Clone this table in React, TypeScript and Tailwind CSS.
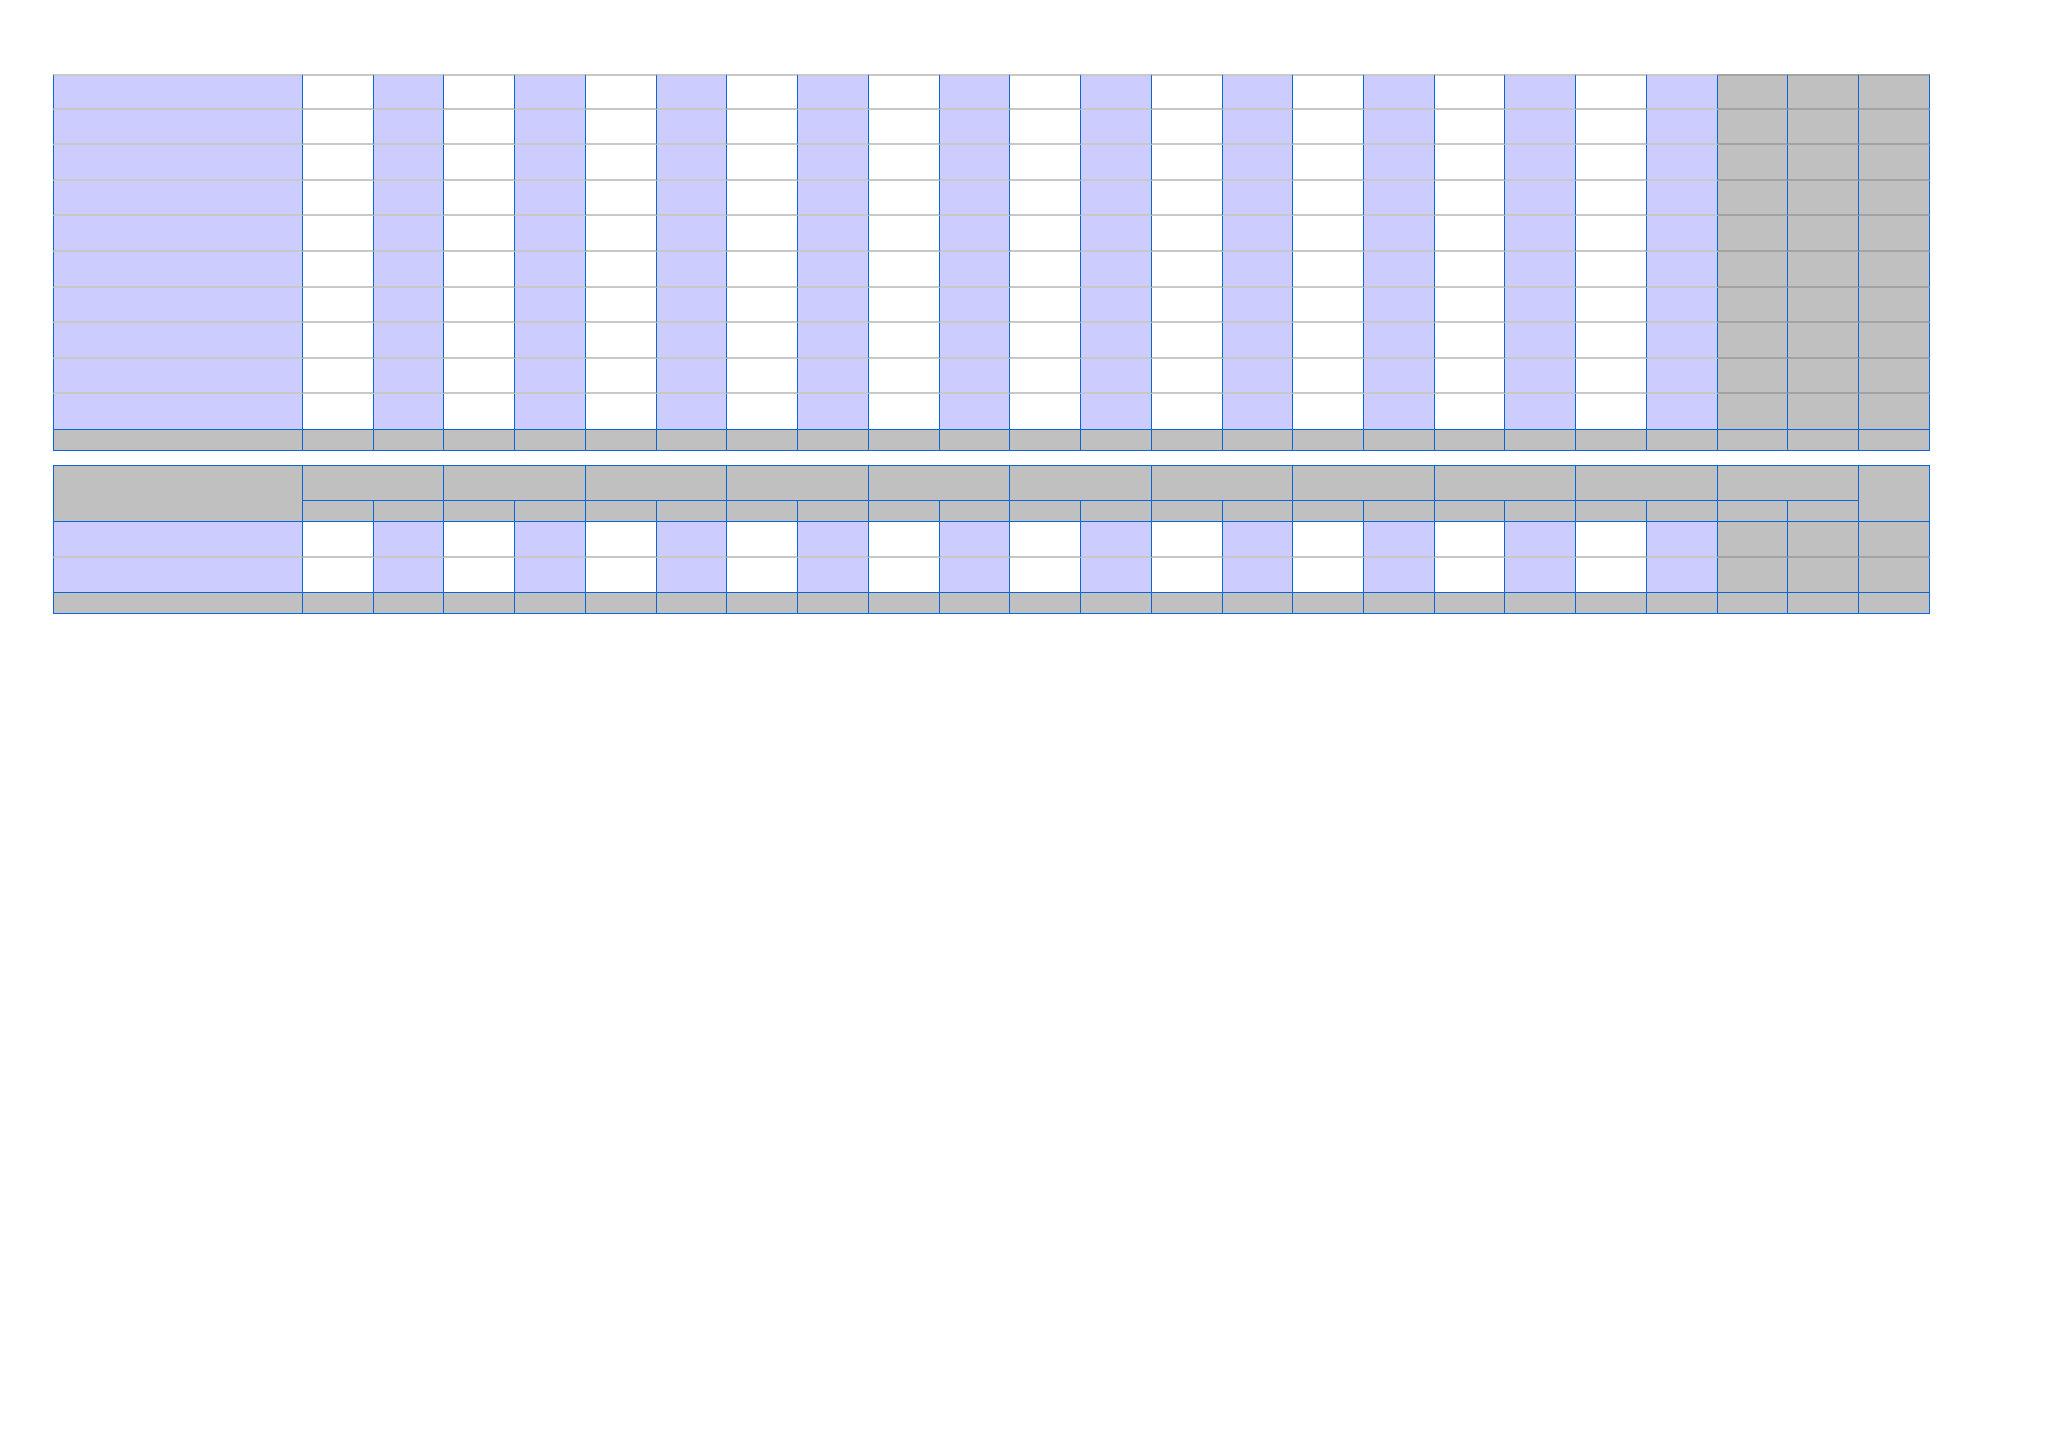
import React from "react"

const WHITE = "bg-white"
const LAV = "bg-[#ccccff]"
const GRAY = "bg-[#c0c0c0]"

// column colors: 20 alternating then 3 gray
const cols = Array.from({ length: 23 }, (_, i) => (i >= 20 ? GRAY : i % 2 === 0 ? WHITE : LAV))

function ColGroup() {
  return (
    <colgroup>
      <col className="w-[250px]" />
      {cols.map((_, i) => (
        <col key={i} className="w-[70.74px]" />
      ))}
    </colgroup>
  )
}

function DataRow({ last, first }: { last?: boolean; first?: boolean }) {
  const bottom = (gray: boolean) =>
    last ? "border-b border-b-[#0a66d2]" : gray ? "border-b-2 border-b-[#a3a3a3]" : "border-b-2 border-b-[#c8c8c8]"
  const top = (gray: boolean) => (first ? (gray ? "border-t-2 border-t-[#a3a3a3]" : "border-t-2 border-t-[#c8c8c8]") : "")
  return (
    <tr className="h-[35.6px]">
      <td className={`${LAV} border-l border-r border-[#0a66d2] ${bottom(false)} ${top(false)}`} />
      {cols.map((c, i) => (
        <td key={i} className={`${c} border-r border-r-[#0a66d2] ${bottom(c === GRAY)} ${top(c === GRAY)}`} />
      ))}
    </tr>
  )
}

function FooterRow() {
  return (
    <tr className="h-[21px]">
      <td className={`${GRAY} border-l border-r border-b border-[#0a66d2]`} />
      {cols.map((_, i) => (
        <td key={i} className={`${GRAY} border-r border-b border-[#0a66d2]`} />
      ))}
    </tr>
  )
}

export default function App() {
  return (
    <div className="min-h-screen bg-white pt-[74px] pl-[53px] font-['Liberation_Sans',sans-serif]">
      <table className="table-fixed w-[1877px] border-separate border-spacing-0">
        <ColGroup />
        <tbody>
          {Array.from({ length: 10 }, (_, i) => (
            <DataRow key={i} first={i === 0} last={i === 9} />
          ))}
          <FooterRow />
        </tbody>
      </table>

      <table className="mt-[14px] table-fixed w-[1877px] border-separate border-spacing-0">
        <ColGroup />
        <thead>
          <tr className="h-[36px]">
            <th rowSpan={2} className={`${GRAY} border border-[#0a66d2]`} />
            {Array.from({ length: 11 }, (_, i) => (
              <th key={i} colSpan={2} className={`${GRAY} border-t border-r border-b border-[#0a66d2]`} />
            ))}
            <th rowSpan={2} className={`${GRAY} border-t border-r border-b border-[#0a66d2]`} />
          </tr>
          <tr className="h-[21px]">
            {Array.from({ length: 22 }, (_, i) => (
              <th key={i} className={`${GRAY} border-r border-b border-[#0a66d2]`} />
            ))}
          </tr>
        </thead>
        <tbody>
          <DataRow />
          <DataRow last />
          <FooterRow />
        </tbody>
      </table>
    </div>
  )
}
